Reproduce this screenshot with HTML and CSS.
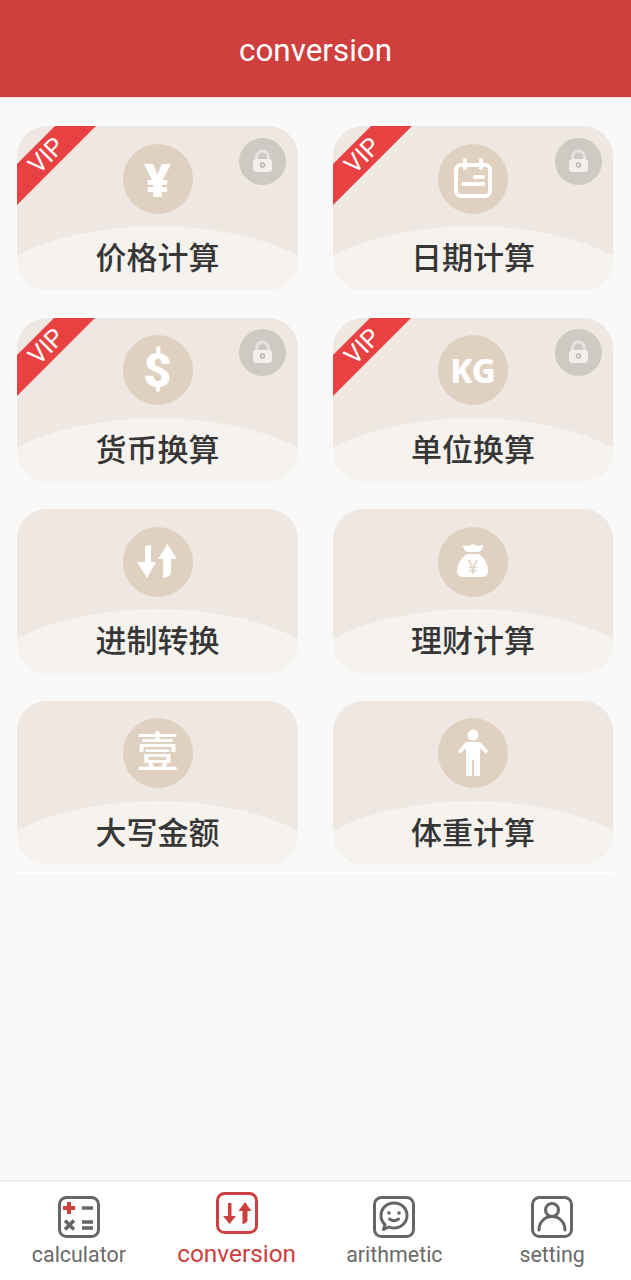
FILE: index.html
```html
<!DOCTYPE html>
<html lang="zh-CN">
<head>
    <meta charset="UTF-8" />
    <meta name="viewport" content="width=device-width, initial-scale=1.0" />
    <title>conversion</title>
    <link rel="stylesheet" href="styles.css">
</head>
<body>

<header class="top-bar">conversion</header>

<main class="main">
    <div class="tool-grid">
        <!-- VIP -->
        <div class="tool-card">
            <div class="vip-ribbon"><span>VIP</span></div>
            <div class="lock-badge">
                <svg viewBox="0 0 47 47"><path class="lock-shackle" d="M17.5 22v-3a6 6 0 0 1 12 0v3"/><rect class="lock-body" x="14" y="21" width="19" height="13" rx="3.5"/><circle class="lock-hole" cx="23.5" cy="27" r="2"/></svg>
            </div>
            <div class="tool-icon tool-icon-text tool-icon-yen">¥</div>
            <div class="tool-name">价格计算</div>
        </div>
        <div class="tool-card">
            <div class="vip-ribbon"><span>VIP</span></div>
            <div class="lock-badge">
                <svg viewBox="0 0 47 47"><path class="lock-shackle" d="M17.5 22v-3a6 6 0 0 1 12 0v3"/><rect class="lock-body" x="14" y="21" width="19" height="13" rx="3.5"/><circle class="lock-hole" cx="23.5" cy="27" r="2"/></svg>
            </div>
            <div class="tool-icon">
                <svg viewBox="0 0 70 70"><g class="line-icon"><rect x="18" y="21" width="34" height="31" rx="5"/><path d="M27 16v8M43 16v8M37 33h8M25 40h20"/></g></svg>
            </div>
            <div class="tool-name">日期计算</div>
        </div>
        <div class="tool-card">
            <div class="vip-ribbon"><span>VIP</span></div>
            <div class="lock-badge">
                <svg viewBox="0 0 47 47"><path class="lock-shackle" d="M17.5 22v-3a6 6 0 0 1 12 0v3"/><rect class="lock-body" x="14" y="21" width="19" height="13" rx="3.5"/><circle class="lock-hole" cx="23.5" cy="27" r="2"/></svg>
            </div>
            <div class="tool-icon tool-icon-text tool-icon-dollar">$</div>
            <div class="tool-name">货币换算</div>
        </div>
        <div class="tool-card">
            <div class="vip-ribbon"><span>VIP</span></div>
            <div class="lock-badge">
                <svg viewBox="0 0 47 47"><path class="lock-shackle" d="M17.5 22v-3a6 6 0 0 1 12 0v3"/><rect class="lock-body" x="14" y="21" width="19" height="13" rx="3.5"/><circle class="lock-hole" cx="23.5" cy="27" r="2"/></svg>
            </div>
            <div class="tool-icon tool-icon-text tool-icon-kg">KG</div>
            <div class="tool-name">单位换算</div>
        </div>

        <!-- free -->
        <div class="tool-card">
            <div class="tool-icon">
                <svg viewBox="0 0 70 70"><path class="fill-icon" d="M22 19q3-1 6-1v17h5L24 51 14 35h8zM40 32h-5l9.500-15L54 32h-6v13q0 5-8 6z"/></svg>
            </div>
            <div class="tool-name">进制转换</div>
        </div>
        <div class="tool-card">
            <div class="tool-icon tool-icon-bag">
                <svg viewBox="0 0 70 70"><path class="fill-icon" d="M25 18q5 2 10-1 5 3 10 1 0 5-4 7H29q-4-2-4-7zM29 27h12q9 7 9 17 0 6-7 6H26q-7 0-7-6 0-10 10-17z"/></svg>
                <span class="bag-yen">¥</span>
            </div>
            <div class="tool-name">理财计算</div>
        </div>
        <div class="tool-card">
            <div class="tool-icon tool-icon-text tool-icon-han">壹</div>
            <div class="tool-name">大写金额</div>
        </div>
        <div class="tool-card">
            <div class="tool-icon">
                <svg viewBox="0 0 70 70"><circle class="fill-icon" cx="35" cy="17" r="5.500"/><path class="fill-icon" d="M30 24h10q2 0 3 1l7 8-2.500 2.500L42 30v28h-6V42h-2v16h-6V30l-5.500 5.500L20 33l7-8q1-1 3-1z"/></svg>
            </div>
            <div class="tool-name">体重计算</div>
        </div>
    </div>
    <div class="grid-line"></div>
</main>

<nav class="tab-bar">
    <div class="tab">
        <svg class="tab-icon" viewBox="0 0 42 42">
            <rect class="tab-frame" x="1.5" y="1.5" width="39" height="39" rx="7"/>
            <path class="tab-red" d="M5 12h12M11 6v12"/>
            <path class="tab-gray" d="M24 12h11M24 26h11M24 32h11M7 24.500l9 9M16 24.500l-9 9"/>
        </svg>
        <span>calculator</span>
    </div>
    <div class="tab tab-active">
        <svg class="tab-icon" viewBox="0 0 42 42">
            <rect class="tab-frame" x="1.5" y="1.5" width="39" height="39" rx="7"/>
            <path class="tab-arrows" d="M12 11h3.500v13H20l-6.500 8L7 24h5zM26.500 19h-4L29 10l6.500 9h-4v9q0 3-5 4z"/>
        </svg>
        <span>conversion</span>
    </div>
    <div class="tab">
        <svg class="tab-icon" viewBox="0 0 42 42">
            <rect class="tab-frame" x="1.5" y="1.5" width="39" height="39" rx="7"/>
            <path class="tab-line" d="M21 7c7.500 0 13 5.500 13 12.500S28 32 21 32c-2 0-4-.5-5-1l-5.500 2.500 1.500-5C9 26 8 23 8 19.500 8 12.500 13.500 7 21 7z"/>
            <circle class="tab-dot" cx="16" cy="17" r="1.800"/>
            <circle class="tab-dot" cx="26" cy="17" r="1.800"/>
            <path class="tab-line" d="M16.500 23q4.500 3.500 9 0"/>
        </svg>
        <span>arithmetic</span>
    </div>
    <div class="tab">
        <svg class="tab-icon" viewBox="0 0 42 42">
            <rect class="tab-frame" x="1.5" y="1.5" width="39" height="39" rx="7"/>
            <circle class="tab-line" cx="21" cy="14" r="6.500"/>
            <path class="tab-line" d="M8 34c0-8 6-13.500 13-13.500S34 26 34 34"/>
        </svg>
        <span>setting</span>
    </div>
</nav>

</body>
</html>
```

FILE: styles.css
```css
body, html {
    margin: 0;
    padding: 0;
    width: 100%;
    height: 100%;
    overflow: hidden;
}

body {
    display: flex;
    flex-direction: column;
    font-family: Roboto, "Noto Sans CJK SC", sans-serif;
    background-color: #f9f9fa;
}

/* Шапка */
.top-bar {
    height: 98px;
    flex-shrink: 0;
    display: flex;
    align-items: center;
    justify-content: center;
    padding-top: 3px;
    box-sizing: border-box;
    background-color: #cf3f3d;
    color: #fff;
    font-size: 31.4px;
    border-bottom: 1px solid #e4dcdc;
}

.main {
    flex: 1;
    padding: 28px 18px 0 17px;
}

.tool-grid {
    display: grid;
    grid-template-columns: 281px 280px;
    grid-auto-rows: 163.5px;
    column-gap: 35px;
    row-gap: 28px;
}

/* Карточка */
.tool-card {
    position: relative;
    overflow: hidden;
    display: flex;
    flex-direction: column;
    align-items: center;
    padding-top: 17.5px;
    box-sizing: border-box;
    border-radius: 30px;
    background-color: #efe7e1;
}

.tool-card::before {
    content: "";
    position: absolute;
    left: -20%;
    top: 100px;
    width: 140%;
    height: 196px;
    border-radius: 50%;
    background-color: #f6f3ef;
}

.tool-icon {
    position: relative;
    width: 70px;
    height: 70px;
    flex-shrink: 0;
    border-radius: 50%;
    background-color: #dfd0c0;
}

.tool-icon svg {
    display: block;
    width: 70px;
    height: 70px;
}

.tool-icon-text {
    display: flex;
    align-items: center;
    justify-content: center;
    color: #fff;
    font-weight: 700;
}

.tool-icon-yen {
    font-family: "Noto Sans", sans-serif;
    font-size: 46px;
    font-weight: 900;
}

.tool-icon-dollar {
    font-family: Roboto, sans-serif;
    font-size: 48px;
    font-weight: 900;
}

.tool-icon-kg {
    font-family: "Noto Sans", sans-serif;
    font-size: 33px;
    font-weight: 800;
}

.tool-icon-han {
    font-family: "Noto Sans CJK SC", sans-serif;
    font-size: 42px;
    line-height: 60px;
    font-weight: 500;
    padding-bottom: 8px;
    box-sizing: border-box;
}

.fill-icon {
    fill: #fff;
}

.line-icon {
    fill: none;
    stroke: #fff;
    stroke-width: 4;
    stroke-linecap: round;
}

.bag-yen {
    position: absolute;
    left: 0;
    right: 0;
    top: 29px;
    text-align: center;
    font-family: "Noto Sans", sans-serif;
    font-size: 19px;
    line-height: 22px;
    color: #dfd0c0;
}

.tool-name {
    position: relative;
    margin-top: 19.5px;
    font-family: "Noto Sans CJK SC", sans-serif;
    font-size: 31px;
    line-height: 46px;
    font-weight: 500;
    color: #363636;
}

/* Лента VIP */
.vip-ribbon {
    position: absolute;
    left: -31px;
    top: 14.5px;
    width: 120px;
    height: 29px;
    background-color: #e84141;
    color: #fff;
    text-align: center;
    font-size: 25px;
    line-height: 29px;
    transform: rotate(-45deg);
    z-index: 1;
}

.lock-badge {
    position: absolute;
    top: 11.5px;
    right: 12px;
    width: 47px;
    height: 47px;
    border-radius: 50%;
    background-color: #cfc9c4;
}

.tool-card:nth-child(even) .lock-badge {
    right: 11px;
}

.lock-badge svg {
    display: block;
}

.lock-shackle {
    fill: none;
    stroke: #e6e2de;
    stroke-width: 3;
}

.lock-body {
    fill: #f1eeeb;
}

.lock-hole {
    fill: none;
    stroke: #bdb6b0;
    stroke-width: 1.5;
}

.grid-line {
    height: 2px;
    margin: 8px 1px 0 -1px;
    background-color: #fff;
}

/* Нижнее меню */
.tab-bar {
    height: 98px;
    flex-shrink: 0;
    display: grid;
    grid-template-columns: repeat(4, 1fr);
    background-color: #fff;
    border-top: 2px solid #f0f0f0;
}

.tab {
    display: flex;
    flex-direction: column;
    align-items: center;
    padding-top: 14px;
    color: #6a6a6a;
    font-size: 21.4px;
    line-height: 24px;
}

.tab span {
    margin-top: 5px;
}

.tab-icon {
    display: block;
    width: 42px;
    height: 42px;
}

.tab-active {
    padding-top: 10px;
    color: #cc4040;
    font-size: 24.4px;
    line-height: 28px;
}

.tab-active span {
    margin-top: 6px;
}

.tab-frame {
    fill: none;
    stroke: #666;
    stroke-width: 3;
}

.tab-active .tab-frame {
    stroke: #cc4040;
}

.tab-red {
    fill: none;
    stroke: #cc4040;
    stroke-width: 4;
}

.tab-gray {
    fill: none;
    stroke: #666;
    stroke-width: 3.5;
}

.tab-arrows {
    fill: #cc4040;
}

.tab-line {
    fill: none;
    stroke: #666;
    stroke-width: 3;
    stroke-linecap: round;
    stroke-linejoin: round;
}

.tab-dot {
    fill: #666;
}
```
